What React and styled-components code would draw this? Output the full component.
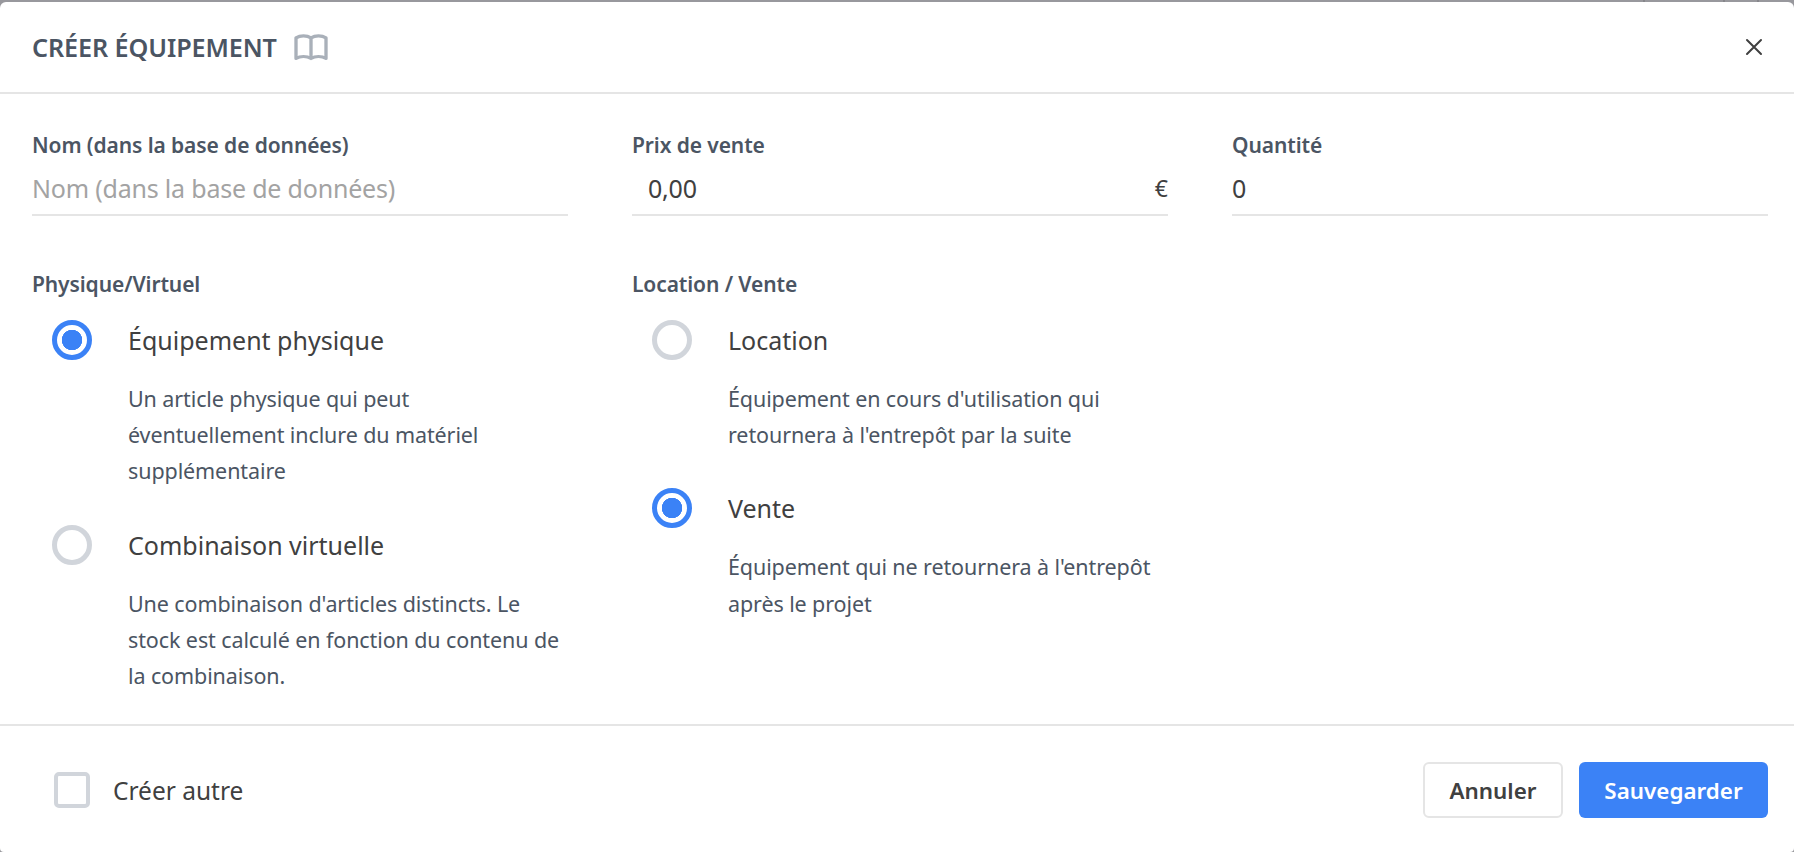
import React from "react"
import styled, { createGlobalStyle } from "styled-components"

const GlobalStyle = createGlobalStyle`
  html, body {
    margin: 0;
    height: 100%;
    overflow: hidden;
    background: #98989d;
  }
  #root {
    height: 100%;
  }
  * {
    box-sizing: border-box;
  }
`;

const App = () => {
  return <Page>
    <GlobalStyle />
    <TopStrip>
      <Tick />
      <Tick $left={78} />
      <Tick $left={32} />
    </TopStrip>
    <Modal>
      <Header>
        <TitleRow>
          <Title>CRÉER ÉQUIPEMENT</Title>
          <BookIcon viewBox="0 0 24 24" preserveAspectRatio="none" fill="none" stroke="currentColor" strokeWidth="2" strokeLinecap="round" strokeLinejoin="round">
            <path d="M12 6.253v13m0-13C10.832 5.477 9.246 5 7.5 5S4.168 5.477 3 6.253v13C4.168 18.477 5.754 18 7.5 18s3.332.477 4.5 1.253m0-13C13.168 5.477 14.754 5 16.5 5c1.747 0 3.332.477 4.5 1.253v13C19.832 18.477 18.247 18 16.5 18c-1.746 0-3.332.477-4.5 1.253" />
          </BookIcon>
        </TitleRow>
        <CloseButton aria-label="Fermer">
          <svg width="18" height="18" viewBox="0 0 18 18" fill="none" stroke="currentColor" strokeWidth="2" strokeLinecap="round">
            <path d="M2 2l14 14M16 2L2 16" />
          </svg>
        </CloseButton>
      </Header>
      <Body>
        <Grid>
          <Field>
            <Label>Nom (dans la base de données)</Label>
            <InputRow>
              <Input placeholder="Nom (dans la base de données)" />
            </InputRow>
          </Field>
          <Field>
            <Label>Prix de vente</Label>
            <InputRow>
              <Input $indent defaultValue="0,00" />
              <Unit>€</Unit>
            </InputRow>
          </Field>
          <Field>
            <Label>Quantité</Label>
            <InputRow>
              <Input defaultValue="0" />
            </InputRow>
          </Field>
          <Group>
            <Label>Physique/Virtuel</Label>
            <Options>
              <Option>
                <Radio $checked />
                <OptionTitle>Équipement physique</OptionTitle>
                <OptionText>Un article physique qui peut<br />éventuellement inclure du matériel<br />supplémentaire</OptionText>
              </Option>
              <Option>
                <Radio />
                <OptionTitle>Combinaison virtuelle</OptionTitle>
                <OptionText>Une combinaison d'articles distincts. Le<br />stock est calculé en fonction du contenu de<br />la combinaison.</OptionText>
              </Option>
            </Options>
          </Group>
          <Group>
            <Label>Location / Vente</Label>
            <Options>
              <Option>
                <Radio />
                <OptionTitle>Location</OptionTitle>
                <OptionText>Équipement en cours d'utilisation qui<br />retournera à l'entrepôt par la suite</OptionText>
              </Option>
              <Option>
                <Radio $checked />
                <OptionTitle>Vente</OptionTitle>
                <OptionText>Équipement qui ne retournera à l'entrepôt<br />après le projet</OptionText>
              </Option>
            </Options>
          </Group>
        </Grid>
      </Body>
      <Footer>
        <CheckRow>
          <Checkbox />
          <CheckLabel>Créer autre</CheckLabel>
        </CheckRow>
        <Buttons>
          <CancelButton>Annuler</CancelButton>
          <SaveButton>Sauvegarder</SaveButton>
        </Buttons>
      </Footer>
    </Modal>
  </Page>
}

const Page = styled.div`
  height: 100%;
  display: flex;
  flex-direction: column;
  font-family: "Noto Sans", "Liberation Sans", sans-serif;
`;

const TopStrip = styled.div`
  height: 2px;
  flex: none;
  display: flex;
  justify-content: flex-end;
  padding-right: 35px;
`;

const Tick = styled.span`
  width: 2px;
  height: 2px;
  margin-left: ${props => props.$left || 0}px;
  background: #86868b;
`;

const Modal = styled.div`
  flex: 1;
  min-height: 0;
  display: flex;
  flex-direction: column;
  background: #fff;
  border-radius: 6px 6px 4px 4px;
`;

const Header = styled.div`
  height: 92px;
  flex: none;
  display: flex;
  align-items: center;
  justify-content: space-between;
  padding: 0 31px 0 32px;
  border-bottom: 2px solid #e5e5e5;
`;

const TitleRow = styled.div`
  display: flex;
  align-items: center;
  gap: 14px;
`;

const Title = styled.h2`
  margin: 0;
  font-size: 25.2px;
  line-height: 30px;
  font-weight: 600;
  letter-spacing: -0.1px;
  color: #4b5563;
`;

const BookIcon = styled.svg`
  width: 40px;
  height: 38px;
  color: #a9b0b9;
`;

const CloseButton = styled.button`
  width: 18px;
  height: 18px;
  padding: 0;
  border: 0;
  background: none;
  display: flex;
  color: #404040;
`;

const Body = styled.div`
  flex: 1;
  min-height: 0;
  padding: 37px 26px 0 32px;
`;

const Grid = styled.div`
  display: grid;
  grid-template-columns: 536px 536px 536px;
  column-gap: 64px;
  row-gap: 54px;
`;

const Field = styled.div`
  display: flex;
  flex-direction: column;
`;

const Label = styled.label`
  display: block;
  font-size: 21px;
  line-height: 28px;
  font-weight: 600;
  letter-spacing: -0.1px;
  color: #4b5563;
`;

const InputRow = styled.div`
  height: 57px;
  display: flex;
  align-items: center;
  padding-top: 3px;
  border-bottom: 2px solid #e5e5e5;
`;

const Input = styled.input`
  flex: 1;
  min-width: 0;
  height: 100%;
  padding: 0 0 0 ${props => props.$indent ? "16px" : "0"};
  border: 0;
  outline: 0;
  background: none;
  font-family: inherit;
  font-size: 25px;
  letter-spacing: -0.2px;
  color: #404040;
  &::placeholder {
    color: #a3a3a3;
    opacity: 1;
  }
`;

const Unit = styled.span`
  font-size: 23px;
  color: #404040;
`;

const Group = styled.div`
  display: flex;
  flex-direction: column;
`;

const Options = styled.div`
  display: flex;
  flex-direction: column;
  gap: 35px;
  margin-top: 22px;
  padding-left: 20px;
`;

const Option = styled.div`
  display: grid;
  grid-template-columns: 40px 1fr;
  column-gap: 36px;
  row-gap: 21px;
  align-items: center;
`;

const Radio = styled.span`
  width: 40px;
  height: 40px;
  border-radius: 50%;
  border: 5px solid ${props => props.$checked ? "#3b82f6" : "#d1d5db"};
  background: ${props => props.$checked ? "radial-gradient(circle, #3b82f6 0 10px, #fff 10.5px)" : "#fff"};
`;

const OptionTitle = styled.span`
  font-size: 25px;
  line-height: 32px;
  color: #404040;
`;

const OptionText = styled.p`
  grid-column: 2;
  margin: 0;
  font-size: 21.5px;
  line-height: 36.2px;
  letter-spacing: -0.1px;
  white-space: nowrap;
  color: #4b5563;
`;

const Footer = styled.div`
  flex: none;
  height: 128px;
  display: flex;
  align-items: center;
  justify-content: space-between;
  padding: 2px 26px 0 54px;
  border-top: 2px solid #e5e5e5;
`;

const CheckRow = styled.div`
  display: flex;
  align-items: center;
  gap: 23px;
`;

const Checkbox = styled.span`
  width: 36px;
  height: 36px;
  border: 4px solid #d1d5db;
  border-radius: 5px;
`;

const CheckLabel = styled.span`
  font-size: 24.5px;
  color: #404040;
`;

const Buttons = styled.div`
  display: flex;
  gap: 16px;
`;

const CancelButton = styled.button`
  width: 140px;
  height: 56px;
  padding: 0;
  border: 2px solid #e5e5e5;
  border-radius: 6px;
  background: #fff;
  font-family: inherit;
  font-size: 22.4px;
  font-weight: 600;
  color: #404040;
`;

const SaveButton = styled(CancelButton)`
  width: 189px;
  border: 0;
  background: #3b82f6;
  color: #fff;
`;

export default App
